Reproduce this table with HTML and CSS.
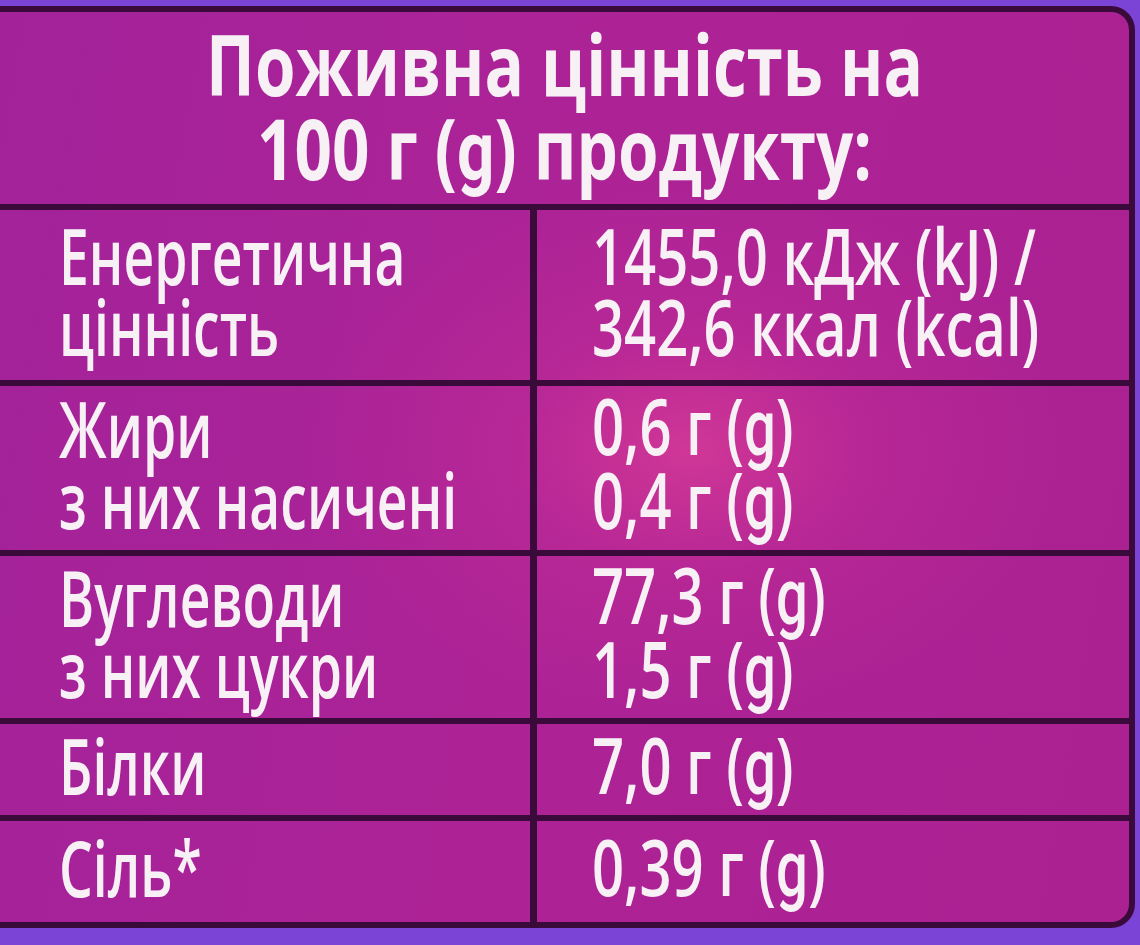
FILE: index.html
```html
<!DOCTYPE html>
<html lang="uk">
<head>
<meta charset="utf-8">
<title>Поживна цінність</title>
<link rel="stylesheet" href="styles.css">
</head>
<body>
<div class="label">
  <div class="head"><div class="t">Поживна цінність на<br>100 г (<span class="g">g</span>) продукту:</div></div>
  <div class="cell name"><div class="t">Енергетична<br>цінність</div></div>
  <div class="cell val"><div class="t">1455,0 кДж (kJ) /<br>342,6 ккал (kcal)</div></div>
  <div class="cell name"><div class="t">Жири<br>з них насичені</div></div>
  <div class="cell val"><div class="t">0,6 г (<span class="g">g</span>)<br>0,4 г (<span class="g">g</span>)</div></div>
  <div class="cell name"><div class="t">Вуглеводи<br>з них цукри</div></div>
  <div class="cell val"><div class="t">77,3 г (<span class="g">g</span>)<br>1,5 г (<span class="g">g</span>)</div></div>
  <div class="cell name"><div class="t">Білки</div></div>
  <div class="cell val"><div class="t">7,0 г (<span class="g">g</span>)</div></div>
  <div class="cell name"><div class="t">Сіль*</div></div>
  <div class="cell val last"><div class="t">0,39 г (<span class="g">g</span>)</div></div>
</div>
</body>
</html>
```
FILE: styles.css
```css
html, body {
  margin: 0;
  padding: 0;
}
body {
  width: 1140px;
  height: 945px;
  overflow: hidden;
  background: #7c44d6;
  font-family: "Open Sans", "Noto Sans", sans-serif;
}
.label {
  margin-top: 6px;
  width: 1135px;
  height: 922px;
  box-sizing: border-box;
  padding: 6px 6px 6px 0;
  background: #390a3a;
  border-radius: 0 24px 24px 0;
  display: grid;
  grid-template-columns: 530px 1fr;
  grid-template-rows: 192px 170px 164px 162px 91px 101px;
  gap: 6px 7px;
}
.head, .cell {
  background: radial-gradient(ellipse 380px 260px at 690px 450px, rgba(214, 58, 150, 0.85) 0%, rgba(194, 44, 150, 0.5) 45%, rgba(176, 36, 150, 0) 100%) fixed,
              linear-gradient(100deg, #a3229a 0%, #ad2396 50%, #ab2192 100%) fixed;
  color: #f7f0f5;
  display: flex;
  flex-direction: column;
  justify-content: center;
}
.head {
  grid-column: 1 / -1;
  align-items: center;
  border-top-right-radius: 18px;
}
.head .t {
  font-weight: 700;
  font-size: 84px;
  line-height: 84px;
  text-align: center;
  white-space: nowrap;
  transform: scaleX(0.78);
  transform-origin: 50% 50%;
}
.cell {
  padding-bottom: 8px;
  box-sizing: border-box;
  min-width: 0;
}
.cell .t {
  font-weight: 600;
  font-size: 78px;
  line-height: 71px;
  white-space: nowrap;
  width: max-content;
  transform-origin: 0 50%;
}
.name .t {
  transform: scaleX(0.685);
}
.val .t {
  transform: scaleX(0.72);
}
.g {
  font-family: Roboto, "Open Sans", sans-serif;
  font-weight: 500;
}
.head .g {
  font-weight: 700;
}
.name {
  padding-left: 59px;
}
.val {
  padding-left: 55px;
}
.last {
  border-bottom-right-radius: 18px;
}
```
